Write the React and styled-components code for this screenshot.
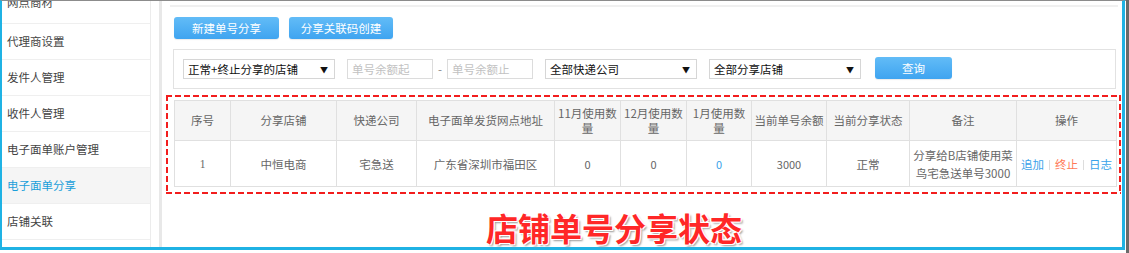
import React from "react";
import styled, { createGlobalStyle } from "styled-components";

const GlobalStyle = createGlobalStyle`
  html, body { margin: 0; padding: 0; background: #fff; }
  body { font-family: "Noto Sans CJK SC", "Noto Sans", sans-serif; }
  * { box-sizing: border-box; }
`;

const Page = styled.div`
  width: 1129px;
  height: 253px;
  display: flex;
  background: #fff;
  overflow: hidden;
`;

const Frame = styled.div`
  width: 1125px;
  height: 250px;
  display: flex;
  border-top: 1px solid #8c8c8c;
  border-left: 2px solid #1fb2e4;
  border-right: 3px solid #1fb2e4;
  border-bottom: 3px solid #1fb2e4;
`;

const EdgeGap = styled.div`
  width: 1px;
  height: 253px;
  border-top: 1px solid #8c8c8c;
`;

const RightEdge = styled.div`
  width: 3px;
  height: 253px;
  background: #6a6a6a;
`;

const Sidebar = styled.nav`
  width: 149px;
  flex: none;
  border-right: 1px solid #ececec;
  overflow: hidden;
  display: flex;
  flex-direction: column;
`;

const NavItem = styled.div`
  flex: none;
  height: 36px;
  line-height: ${(p) => (p.$first ? "29px" : "35px")};
  padding-left: 5px;
  border-bottom: 1px solid #efefef;
  font-size: 11.5px;
  color: ${(p) => (p.$active ? "#1a9fda" : "#444")};
  background: ${(p) => (p.$active ? "#f5f5f5" : "#fff")};
  margin-top: ${(p) => (p.$first ? "-13px" : "0")};
  white-space: nowrap;
`;

const Splitter = styled.div`
  flex: none;
  width: 11px;
  border-right: 3px solid #e8e8e8;
`;

const Content = styled.main`
  flex: 1;
  display: flex;
  flex-direction: column;
  min-width: 0;
`;

const TopLine = styled.div`
  height: 2px;
  margin: 4px 4px 0 8px;
  background: #f0f0f0;
`;

const ButtonRow = styled.div`
  display: flex;
  gap: 10px;
  margin: 10px 0 0 12px;
`;

const BlueButton = styled.button`
  height: 22px;
  width: ${(p) => p.$w}px;
  margin-left: ${(p) => p.$ml || 0}px;
  border: none;
  border-radius: 3px;
  padding: 0;
  background: linear-gradient(#62bcf7, #3fa4f0);
  color: #fff;
  font-family: inherit;
  font-size: 11.5px;
  line-height: 22px;
  text-align: center;
  box-shadow: 0 1px 1px rgba(0, 0, 0, 0.08);
`;

const FilterBox = styled.div`
  display: flex;
  align-items: flex-end;
  width: 943px;
  height: 43px;
  margin: 10px 0 0 11px;
  padding: 0 9px 9px;
  border: 1px solid #e2e2e2;
`;

const FakeSelect = styled.div`
  width: 152px;
  height: 20px;
  flex: none;
  display: flex;
  align-items: center;
  justify-content: space-between;
  padding: 0 6px 0 4px;
  border: 1px solid #d6d6d6;
  background: #fff;
  font-size: 11.5px;
  color: #111;
  margin-left: ${(p) => p.$ml || 0}px;
`;

const Arrow = styled.span`
  font-size: 8px;
  color: #111;
`;

const NumInput = styled.input`
  width: 86px;
  height: 20px;
  flex: none;
  border: 1px solid #dcdcdc;
  padding: 0 4px;
  font-family: inherit;
  font-size: 11.5px;
  color: #333;
  margin-left: ${(p) => p.$ml || 0}px;
  &::placeholder { color: #c2c2c2; }
`;

const Dash = styled.span`
  width: 14px;
  flex: none;
  text-align: center;
  font-size: 11.5px;
  color: #888;
  line-height: 20px;
`;

const DashedBox = styled.section`
  width: 955px;
  margin: 6px 0 0 4px;
  padding: 5px 5px 7px 8px;
  background:
    repeating-linear-gradient(to right, #f21d1d 0 6px, transparent 6px 9px) top left / 100% 2px no-repeat,
    repeating-linear-gradient(to right, #f21d1d 0 6px, transparent 6px 9px) bottom left / 100% 2px no-repeat,
    repeating-linear-gradient(to bottom, #f21d1d 0 6px, transparent 6px 9px) top left / 2px 100% no-repeat,
    repeating-linear-gradient(to bottom, #f21d1d 0 6px, transparent 6px 9px) top right / 2px 100% no-repeat;
`;

const Table = styled.table`
  width: 942px;
  table-layout: fixed;
  border-collapse: collapse;
  font-size: 11.5px;
  color: #666;
`;

const Th = styled.th`
  height: 40px;
  padding: 0 2px;
  background: #f5f5f5;
  border: 1px solid #e0e0e0;
  font-weight: normal;
  line-height: 15px;
  text-align: center;
`;

const Td = styled.td`
  height: 46px;
  padding: 0 2px;
  border: 1px solid #e0e0e0;
  text-align: center;
  line-height: 18px;
  color: ${(p) => p.$color || "#666"};
  font-family: ${(p) => (p.$serif ? '"Liberation Serif", serif' : "inherit")};
  font-size: ${(p) => (p.$num ? "11px" : "11.5px")};
`;

const Link = styled.span`
  color: ${(p) => (p.$danger ? "#ff7a57" : "#3aa2ea")};
`;

const Sep = styled.span`
  display: inline-block;
  width: 1px;
  height: 10px;
  margin: 0 5px;
  background: #dddddd;
  vertical-align: -1px;
`;

const Title = styled.div`
  margin-top: 13px;
  padding-left: 324px;
  height: 40px;
  line-height: 40px;
  font-size: 32px;
  font-weight: 700;
  color: #ff2727;
  text-shadow:
    -1px -1px 0 #fff, 1px -1px 0 #fff, -1px 1px 0 #fff, 1px 1px 0 #fff,
    2px 2px 2px #9a9a9a;
  white-space: nowrap;
`;

const navItems = [
  "网点商材",
  "代理商设置",
  "发件人管理",
  "收件人管理",
  "电子面单账户管理",
  "电子面单分享",
  "店铺关联",
];

const cols = [56, 106, 80, 138, 66, 66, 65, 75, 83, 107, 100];

const headers = [
  "序号",
  "分享店铺",
  "快递公司",
  "电子面单发货网点地址",
  ["11月使用数", "量"],
  ["12月使用数", "量"],
  ["1月使用数", "量"],
  "当前单号余额",
  "当前分享状态",
  "备注",
  "操作",
];

export default function App() {
  return (
    <>
      <GlobalStyle />
      <Page>
        <Frame>
          <Sidebar>
            {navItems.map((t, i) => (
              <NavItem key={t} $first={i === 0} $active={t === "电子面单分享"}>
                {t}
              </NavItem>
            ))}
          </Sidebar>
          <Splitter />
          <Content>
            <TopLine />
            <ButtonRow>
              <BlueButton $w={105}>新建单号分享</BlueButton>
              <BlueButton $w={104}>分享关联码创建</BlueButton>
            </ButtonRow>
            <FilterBox>
              <FakeSelect>
                <span>正常+终止分享的店铺</span>
                <Arrow>▼</Arrow>
              </FakeSelect>
              <NumInput $ml={12} placeholder="单号余额起" />
              <Dash>-</Dash>
              <NumInput placeholder="单号余额止" />
              <FakeSelect $ml={12}>
                <span>全部快递公司</span>
                <Arrow>▼</Arrow>
              </FakeSelect>
              <FakeSelect $ml={12}>
                <span>全部分享店铺</span>
                <Arrow>▼</Arrow>
              </FakeSelect>
              <BlueButton $w={77} $ml={14}>
                查询
              </BlueButton>
            </FilterBox>
            <DashedBox>
              <Table>
                <colgroup>
                  {cols.map((w, i) => (
                    <col key={i} style={{ width: w }} />
                  ))}
                </colgroup>
                <thead>
                  <tr>
                    {headers.map((h, i) => (
                      <Th key={i}>
                        {Array.isArray(h) ? (
                          <>
                            {h[0]}
                            <br />
                            {h[1]}
                          </>
                        ) : (
                          h
                        )}
                      </Th>
                    ))}
                  </tr>
                </thead>
                <tbody>
                  <tr>
                    <Td $serif>1</Td>
                    <Td>中恒电商</Td>
                    <Td>宅急送</Td>
                    <Td>广东省深圳市福田区</Td>
                    <Td $num>0</Td>
                    <Td $num>0</Td>
                    <Td $num $color="#3aa2ea">0</Td>
                    <Td $num>3000</Td>
                    <Td>正常</Td>
                    <Td>
                      分享给B店铺使用菜
                      <br />
                      鸟宅急送单号3000
                    </Td>
                    <Td>
                      <Link>追加</Link>
                      <Sep />
                      <Link $danger>终止</Link>
                      <Sep />
                      <Link>日志</Link>
                    </Td>
                  </tr>
                </tbody>
              </Table>
            </DashedBox>
            <Title>店铺单号分享状态</Title>
          </Content>
        </Frame>
        <EdgeGap />
        <RightEdge />
      </Page>
    </>
  );
}
